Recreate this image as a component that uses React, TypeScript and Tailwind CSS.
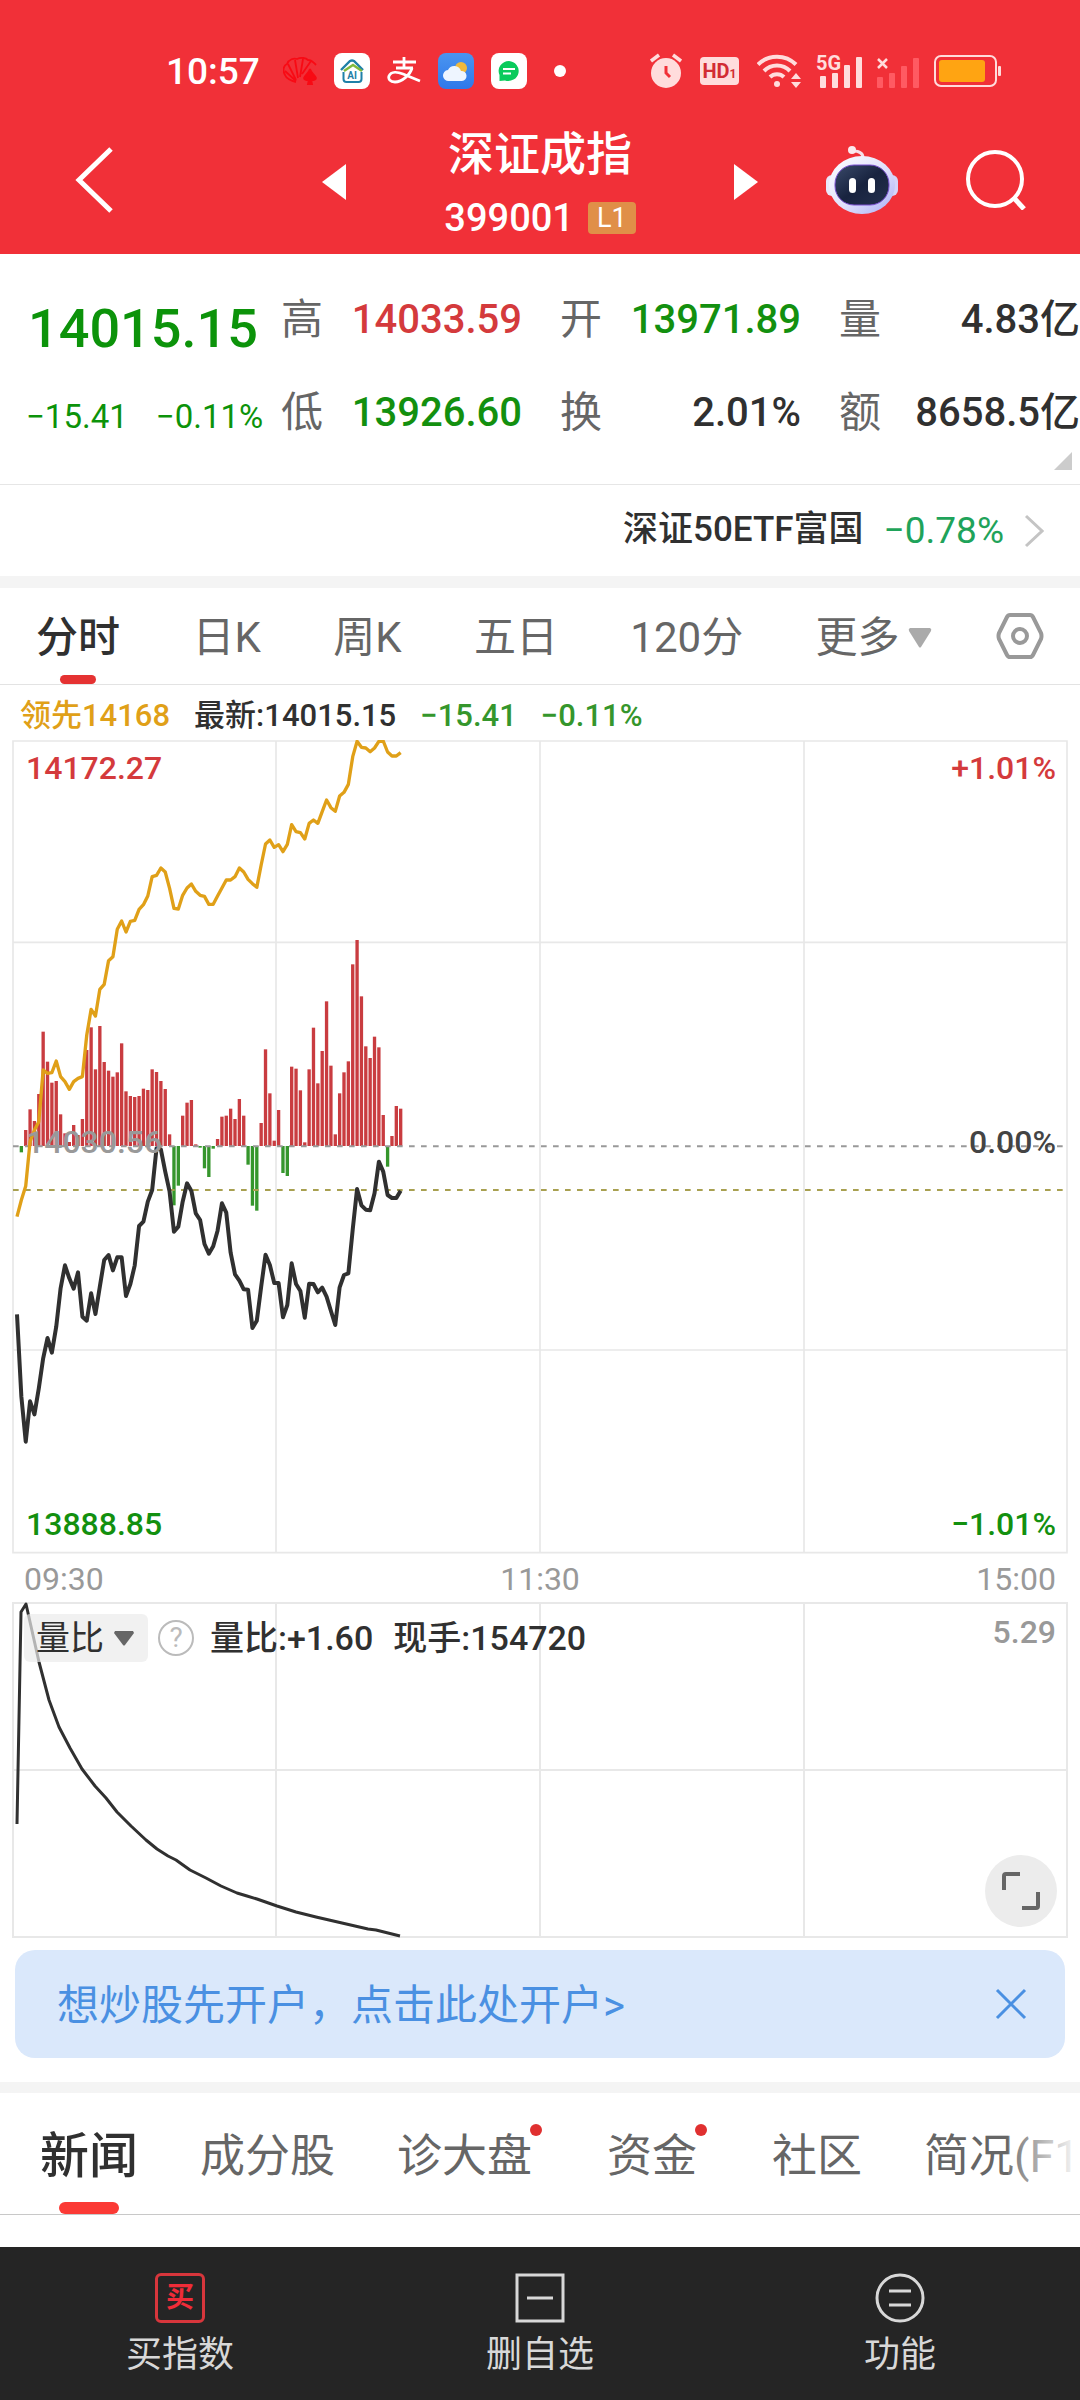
import { useState } from "react";
import type { ReactNode } from "react";

// one value per minute since 09:30, in chart units
const PRICE = [
  1723, 1970, 2105, 1984, 2023, 1945, 1855, 1794, 1838, 1760, 1645, 1576, 1615, 1646, 1597, 1730, 1742, 1660, 1722, 1640,
  1560, 1545, 1591, 1552, 1552, 1668, 1632, 1576, 1458, 1445, 1385, 1350, 1225, 1228, 1295, 1355, 1475, 1460, 1385, 1330,
  1353, 1420, 1440, 1512, 1541, 1519, 1472, 1390, 1418, 1538, 1603, 1622, 1648, 1649, 1764, 1742, 1640, 1544, 1575, 1629,
  1629, 1732, 1695, 1570, 1632, 1653, 1733, 1631, 1632, 1657, 1643, 1670, 1713, 1755, 1642, 1605, 1600, 1468, 1347, 1396,
  1409, 1411, 1360, 1265, 1295, 1365, 1374, 1374, 1352,
];

const LEADING = [
  1430, 1380, 1338, 1205, 1170, 1145, 990, 1000, 998, 963, 1010, 1025, 1048, 1025, 1015, 1010, 885, 808, 828, 748,
  733, 662, 650, 568, 543, 576, 544, 541, 508, 494, 468, 410, 406, 384, 396, 445, 505, 507, 466, 444,
  432, 454, 466, 469, 493, 493, 468, 444, 420, 420, 410, 384, 396, 418, 431, 442, 375, 312, 300, 322,
  314, 335, 313, 254, 275, 278, 297, 250, 240, 250, 215, 180, 203, 214, 168, 157, 133, 50, 4, 22,
  24, 35, 24, 4, 3, 36, 48, 48, 38,
];

const BARS = [
  0, -19, 48, 110, 75, 156, 343, 253, 190, 195, 95, 38, 12, 63, 33, 81, 288, 356, 230, 360,
  252, 226, 208, 221, 308, 164, 150, 147, 150, 172, 168, 230, 222, 195, 171, 35, -178, -119, 91, 130,
  138, 5, -5, -67, -93, -8, 21, 88, 91, 112, 81, 141, 91, -56, -179, -194, 69, 290, 158, 16,
  108, -81, -90, 238, 232, 167, 11, 230, 355, 188, 285, 434, 241, 35, 158, 221, 254, 545, 618, 449,
  299, 264, 328, 296, 93, -62, 30, 120, 112,
];

const RATIO =
  "5,222 9,10 14,2 27,60 37,98 47,125 58,146 70,167 83,184 94,196 105,210 119,224 134,238 145,247 156,254 164,258 178,268 194,276 209,284 225,291 235,294 245,297 265,304 284,310 304,315 330,321 356,327 364,328 388,334";

const BASE = 1218;
const minuteX = (i: number) => 15 + i * 13.08;
const toPoints = (ys: number[]) => ys.map((y, i) => `${minuteX(i).toFixed(1)},${y}`).join(" ");

const STATS = [
  [
    { label: "高", value: "14033.59", color: "text-[#d43a3c]" },
    { label: "低", value: "13926.60", color: "text-[#13900f]" },
  ],
  [
    { label: "开", value: "13971.89", color: "text-[#13900f]" },
    { label: "换", value: "2.01%", color: "text-[#303030]" },
  ],
  [
    { label: "量", value: "4.83亿", color: "text-[#303030]" },
    { label: "额", value: "8658.5亿", color: "text-[#303030]" },
  ],
];

const PERIODS = ["分时", "日K", "周K", "五日", "120分"];

const NEWS_TABS = [
  { name: "新闻", dot: false, size: "" },
  { name: "成分股", dot: false, size: "" },
  { name: "诊大盘", dot: true, size: "" },
  { name: "资金", dot: true, size: "px-[13px]" },
  { name: "社区", dot: false, size: "" },
  { name: "简况(F10)", dot: false, size: "" },
];

function StatusBar() {
  return (
    <div className="flex h-[110px] items-center justify-between pt-8 pr-[79px] pl-[166px]">
      <div className="flex items-center gap-[17px]">
        <span className="mr-1.5 text-[37px] leading-none font-medium">10:57</span>
        <svg width="34" height="28" viewBox="0 0 34 28" fill="none" stroke="#f80a14" strokeWidth="1.800">
          <path d="M13 25C8 24 3 21 2 18-1 13 1 8 4 7c2-5 7-6 10-5 4-2 9-1 11 1 4 0 6 3 8 5" />
          <path d="M13 24 2 14M13 23 5 7M15 21 12 3M17 20 20 2M19 17 28 4" />
          <path d="M27 12c1 4 5 6 6 9 0 2-3 3-5 1l1 5h-4l1-5c-2 2-5 1-5-1 1-3 5-5 6-9z" fill="#f80a14" />
        </svg>
        <svg width="36" height="36" viewBox="0 0 36 36" fill="none">
          <rect width="36" height="36" rx="8" fill="#fff" />
          <path d="M7 17 16 8q2-1 4 0l9 9" stroke="#1f80a8" strokeWidth="2.400" />
          <path d="M10 18l9-6 9 6" stroke="#7fb93d" strokeWidth="2.400" />
          <path d="M9.500 19v7q0 3 3 3h12q3 0 3-3v-7" stroke="#1f80a8" strokeWidth="2" />
          <text x="18" y="26" fontSize="10" fontWeight="700" textAnchor="middle" fill="#1f80a8">AI</text>
        </svg>
        <svg width="34" height="28" viewBox="0 0 34 28" fill="none" stroke="#fff" strokeWidth="2.800">
          <path d="M6 5h23M9 11h17M17 0v11" />
          <path d="M25 11C23 18 15 25 8 25 3 25 1 22 2 19c2-5 9-4 14-2l17 7" />
        </svg>
        <svg width="36" height="36" viewBox="0 0 36 36">
          <defs>
            <linearGradient id="sky" x1="0" y1="0" x2="0" y2="1">
              <stop offset="0" stopColor="#4a95f0" />
              <stop offset="1" stopColor="#2f78ea" />
            </linearGradient>
          </defs>
          <rect width="36" height="36" rx="8" fill="url(#sky)" />
          <circle cx="23" cy="15" r="6" fill="#f0b93c" />
          <path d="M11 28a5.500 5.500 0 0 1-1-11 7 7 0 0 1 13 1 5 5 0 0 1 1 10z" fill="#eef5ff" />
        </svg>
        <svg width="36" height="36" viewBox="0 0 36 36">
          <rect width="36" height="36" rx="8" fill="#fff" />
          <path d="M18 8a10.500 10 0 1 1-4 19.500L8.500 28v-6A10.500 10 0 0 1 18 8z" fill="#0acb5c" />
          <path d="M12 16h12M12 20.500h8" stroke="#fff" strokeWidth="1.800" />
        </svg>
        <span className="ml-2.5 size-3 rounded-full bg-white" />
      </div>

      <div className="flex items-center gap-3.5 text-[#ffdcdc]">
        <svg width="32" height="36" viewBox="0 0 32 36" fill="currentColor">
          <circle cx="16" cy="20" r="15" />
          <path d="M1 8 9 2M31 8l-8-6" stroke="currentColor" strokeWidth="3.500" />
          <path d="M16 13v7l4 4" fill="none" stroke="#f13038" strokeWidth="3" />
        </svg>
        <span className="ml-1 flex h-7 w-[39px] items-baseline justify-center rounded bg-[#ffdcdc] leading-7 text-[#d22c33]">
          <b className="text-[20px]">HD</b>
          <b className="text-[12px]">1</b>
        </span>
        <svg className="ml-1" width="45" height="36" viewBox="0 0 45 36" fill="none" stroke="currentColor" strokeWidth="4">
          <path d="M1 11.500a27 27 0 0 1 38 0M7 18a18 18 0 0 1 26 0M13 24a10 10 0 0 1 14 0" />
          <circle cx="20" cy="31" r="3" fill="currentColor" stroke="none" />
          <path d="M34 26l5-6 5 6zM34 29l5 6 5-6z" fill="currentColor" stroke="none" />
        </svg>
        <div className="relative">
          <svg width="47" height="34" viewBox="0 0 47 34" fill="currentColor">
            <rect x="4" y="22" width="6" height="12" rx="1" />
            <rect x="16" y="19" width="6" height="15" rx="1" />
            <rect x="28" y="11" width="6" height="23" rx="1" />
            <rect x="40" y="3" width="6" height="31" rx="1" />
          </svg>
          <b className="absolute top-0 left-0 text-[20px] leading-[18px]">5G</b>
        </div>
        <svg width="43" height="34" viewBox="0 0 43 34">
          <g fill="#ff5a62">
            <rect y="23" width="6" height="11" rx="1" />
            <rect x="12" y="19" width="6" height="15" rx="1" />
            <rect x="24" y="12" width="6" height="22" rx="1" />
            <rect x="36" y="4" width="6" height="30" rx="1" />
          </g>
          <path d="M1 5l9 9M10 5l-9 9" stroke="currentColor" strokeWidth="2.500" />
        </svg>
        <svg width="67" height="32" viewBox="0 0 67 32" fill="none">
          <rect x="1" y="1" width="61" height="30" rx="6" stroke="currentColor" strokeWidth="2" />
          <rect x="5" y="5" width="46" height="22" rx="3" fill="#ffa412" />
          <rect x="64" y="11" width="3" height="10" rx="1" fill="currentColor" />
        </svg>
      </div>
    </div>
  );
}

function Robot() {
  return (
    <svg width="72" height="68" viewBox="0 0 72 68">
      <defs>
        <linearGradient id="shell" x1="0" y1="0" x2="1" y2="1">
          <stop offset="0" stopColor="#ffffff" />
          <stop offset="0.550" stopColor="#dfe0fb" />
          <stop offset="1" stopColor="#a9aef5" />
        </linearGradient>
        <linearGradient id="visor" x1="0" y1="0" x2="1" y2="1">
          <stop offset="0" stopColor="#3a4a6a" />
          <stop offset="0.500" stopColor="#18233f" />
          <stop offset="1" stopColor="#24304d" />
        </linearGradient>
      </defs>
      <path d="M37 12c0-5-4-7-10-7" fill="none" stroke="#f6dfe8" strokeWidth="3" />
      <circle cx="26" cy="4" r="4" fill="#fbe9ee" />
      <rect x="0" y="29" width="12" height="21" rx="6" fill="#e9e8fb" />
      <rect x="60" y="29" width="12" height="21" rx="6" fill="#d5d4f8" />
      <ellipse cx="36" cy="39" rx="33" ry="29" fill="url(#shell)" />
      <rect x="9" y="19" width="54" height="40" rx="19" fill="url(#visor)" stroke="#7a4fd0" strokeWidth="1" />
      <rect x="23" y="32" width="7" height="15" rx="3.500" fill="#fff" />
      <rect x="42" y="32" width="7" height="15" rx="3.500" fill="#fff" />
    </svg>
  );
}

function TitleBar() {
  return (
    <div className="grid h-36 grid-cols-[1fr_auto_1fr] items-center">
      <div className="pb-1 pl-[75px]">
        <button aria-label="返回" className="block">
          <svg width="38" height="66" viewBox="0 0 38 66" fill="none" stroke="#fff" strokeWidth="5">
            <path d="M36 2 4 33l32 31" />
          </svg>
        </button>
      </div>
      <div className="flex items-center gap-[98px]">
        <button aria-label="上一个">
          <svg width="24" height="36" viewBox="0 0 24 36" fill="#fff">
            <path d="M24 0v36L0 18z" />
          </svg>
        </button>
        <div className="pt-2 text-center">
          <h1 className="text-[46px] leading-16 font-medium">深证成指</h1>
          <div className="flex items-center justify-center gap-3.5 leading-16">
            <span className="text-[38px] font-medium">399001</span>
            <span className="rounded bg-[#e08f48] px-[9px] text-[27px] leading-8">L1</span>
          </div>
        </div>
        <button aria-label="下一个">
          <svg width="24" height="36" viewBox="0 0 24 36" fill="#fff">
            <path d="M0 0v36l24-18z" />
          </svg>
        </button>
      </div>
      <div className="flex items-center justify-end gap-[68px] pr-[54px] pb-1">
        <button aria-label="助手">
          <Robot />
        </button>
        <button aria-label="搜索">
          <svg width="60" height="60" viewBox="0 0 60 60" fill="none" stroke="#fff" strokeWidth="4">
            <circle cx="29" cy="29" r="27" />
            <path d="M48 48l10 11" strokeWidth="5" />
          </svg>
        </button>
      </div>
    </div>
  );
}

function Quote() {
  return (
    <section className="relative flex border-b border-[#e6e6e6] pb-[25px]">
      <div className="w-[281px] shrink-0 pt-7 text-[#0c930a]">
        <div className="pl-7 text-[54px] leading-[93px] font-medium">14015.15</div>
        <div className="flex gap-7 pl-[26px] text-[33px] leading-[84px]">
          <span>−15.41</span>
          <span>−0.11%</span>
        </div>
      </div>
      <div className="grid flex-1 grid-cols-3 gap-[38px] pt-[19px]">
        {STATS.map((col) => (
          <dl key={col[0].label}>
            {col.map((s) => (
              <div key={s.label} className="flex h-[93px] items-center justify-between whitespace-nowrap">
                <dt className="text-[42px] leading-none text-[#666]">{s.label}</dt>
                <dd className={`text-[40px] leading-none font-medium ${s.color}`}>{s.value}</dd>
              </div>
            ))}
          </dl>
        ))}
      </div>
      <svg className="absolute right-2 bottom-3.5" width="18" height="18" viewBox="0 0 18 18" fill="#ccc">
        <path d="M18 0v18H0z" />
      </svg>
    </section>
  );
}

function PeriodTabs() {
  const [period, setPeriod] = useState("分时");

  return (
    <nav className="flex h-[97px] items-center justify-between border-b border-[#e3e3e3] px-9 text-[42px] leading-none text-[#666]">
      {PERIODS.map((p) => (
        <button
          key={p}
          onClick={() => setPeriod(p)}
          className={p === period ? "relative h-full pt-1 font-medium text-[#303030]" : "h-full pt-1"}
        >
          {p}
          {p === period && (
            <span className="absolute bottom-0 left-1/2 h-[9px] w-9 -translate-x-1/2 rounded-full bg-[#e53232]" />
          )}
        </button>
      ))}
      <button className="-mr-2 flex h-full items-center gap-2 pt-1">
        更多
        <svg width="24" height="20" viewBox="0 0 24 20" fill="#aaa">
          <path d="M2 0h20q2 1 1 3L13 19q-1 1-2 0L1 3Q0 1 2 0z" />
        </svg>
      </button>
      <button aria-label="设置">
        <svg width="48" height="46" viewBox="0 0 48 46" fill="none" stroke="#999" strokeWidth="4">
          <path d="M14 2h20q2 0 3 2l8 16q1 3 0 6l-8 16q-1 2-3 2H14q-2 0-3-2L3 26q-1-3 0-6l8-16q1-2 3-2z" />
          <circle cx="24" cy="23" r="7" />
        </svg>
      </button>
    </nav>
  );
}

function PriceChart() {
  return (
    <div className="relative text-[32px] leading-9 font-medium">
      <svg className="block w-full" viewBox="0 0 3168 2442" fill="none">
        <g stroke="#e8e8e8" strokeWidth="5">
          <path d="M3 3h3162v2435H3zM3 607h3162M3 1830h3162" />
          <path d="M792 3v2435M1584 3v2435M2376 3v2435" />
        </g>
        {BARS.map((h, i) => (
          <rect
            key={i}
            x={minuteX(i) - 5}
            y={h > 0 ? BASE - h : BASE}
            width="10"
            height={Math.abs(h)}
            fill={h > 0 ? "#c93c40" : "#35962c"}
          />
        ))}
        <path d={`M3 ${BASE + 1}H3165`} stroke="#999" strokeWidth="6" strokeDasharray="17 19" />
        <path d="M3 1350H3165" stroke="#a8a050" strokeWidth="6" strokeDasharray="17 19" />
        <polyline points={toPoints(LEADING)} stroke="#e0a018" strokeWidth="10" strokeLinejoin="round" />
        <polyline points={toPoints(PRICE)} stroke="#303030" strokeWidth="12" strokeLinejoin="round" />
      </svg>
      <span className="absolute top-2.5 left-3.5 text-[#d43a3c]">14172.27</span>
      <span className="absolute top-2.5 right-3 text-[#d43a3c]">+1.01%</span>
      <span className="absolute top-1/2 left-3.5 -translate-y-[23px] text-[#999]">14030.56</span>
      <span className="absolute top-1/2 right-3 -translate-y-[23px] text-[#444]">0.00%</span>
      <span className="absolute bottom-3 left-3.5 text-[#13900f]">13888.85</span>
      <span className="absolute right-3 bottom-3 text-[#13900f]">−1.01%</span>
    </div>
  );
}

function RatioChart() {
  return (
    <div className="relative">
      <svg className="block w-full" viewBox="0 0 1056 336" fill="none">
        <path
          d="M1 1h1054v334H1zM1 168h1054M264 1v334M528 1v334M792 1v334"
          stroke="#e8e8e8"
          strokeWidth="2"
        />
        <polyline points={RATIO} stroke="#303030" strokeWidth="3" strokeLinejoin="round" />
      </svg>
      <div className="absolute top-3 left-3 flex items-center text-[34px] leading-[48px] text-[#303030]">
        <button className="flex items-center gap-2.5 rounded-md bg-[#ebebeb]/70 pr-3.5 pl-3">
          量比
          <svg width="20" height="15" viewBox="0 0 20 15" fill="#666">
            <path d="M1 0h18l1 2-9 12q-1 1-2 0L0 2z" />
          </svg>
        </button>
        <button
          aria-label="说明"
          className="ml-2.5 flex size-9 items-center justify-center rounded-full border-2 border-[#bbb] text-[28px] leading-none text-[#bbb]"
        >
          ?
        </button>
        <span className="ml-4 font-medium">量比:+1.60</span>
        <span className="ml-5 font-medium">现手:154720</span>
      </div>
      <span className="absolute top-3 right-3 text-[32px] leading-9 font-medium text-[#999]">5.29</span>
      <button
        aria-label="全屏"
        className="absolute right-[11px] bottom-[11px] flex size-[72px] items-center justify-center rounded-full bg-[#ececec]"
      >
        <svg width="38" height="38" viewBox="0 0 38 38" fill="none" stroke="#666" strokeWidth="4">
          <path d="M2 18V4q0-2 2-2h14M36 20v14q0 2-2 2H20" />
        </svg>
      </button>
    </div>
  );
}

function NewsTabs() {
  const [tab, setTab] = useState("新闻");

  return (
    <nav className="relative overflow-hidden border-b border-[#c8c8c8]">
      <div className="flex h-[121px] gap-[62px] pl-10 text-[45px] leading-none whitespace-nowrap text-[#666]">
        {NEWS_TABS.map((t) => (
          <button
            key={t.name}
            onClick={() => setTab(t.name)}
            className={`relative shrink-0 pt-1.5 ${t.size} ${t.name === tab ? "text-[49px] font-medium text-[#303030]" : ""}`}
          >
            <span className="relative">
              {t.name}
              {t.dot && <span className="absolute -top-1.5 -right-2.5 size-3 rounded-full bg-[#e03030]" />}
            </span>
            {t.name === tab && (
              <span className="absolute bottom-0 left-1/2 h-3 w-15 -translate-x-1/2 rounded-full bg-[#fb3a35]" />
            )}
          </button>
        ))}
      </div>
      <div className="pointer-events-none absolute inset-y-0 right-0 w-[72px] bg-linear-to-r from-white/10 to-white" />
    </nav>
  );
}

function BarButton({ label, children }: { label: string; children: ReactNode }) {
  return (
    <button className="flex flex-col items-center gap-2.5 pt-[26px] text-[36px] leading-[44px] text-[#d8d8d8]">
      {children}
      {label}
    </button>
  );
}

export default function App() {
  const [showBanner, setShowBanner] = useState(true);

  return (
    <div className="flex min-h-screen flex-col overflow-hidden bg-white font-['Roboto','Noto_Sans_CJK_SC',sans-serif] text-[#303030]">
      <header className="bg-[#f13038] text-white">
        <StatusBar />
        <TitleBar />
      </header>

      <Quote />

      <a href="#etf" className="flex h-[91px] items-center justify-end pr-9">
        <span className="text-[35px] font-medium">深证50ETF富国</span>
        <span className="ml-5 text-[37px] text-[#1fa35a]">−0.78%</span>
        <svg className="ml-5" width="20" height="34" viewBox="0 0 20 34" fill="none" stroke="#c4c4c4" strokeWidth="3">
          <path d="M2 2l16 15L2 32" />
        </svg>
      </a>
      <div className="h-3 bg-[#f4f4f4]" />

      <PeriodTabs />

      <main className="px-3">
        <div className="flex h-[55px] items-center pt-1.5 pl-2 text-[31px] leading-none font-medium whitespace-nowrap">
          <span className="text-[#e0a018]">领先14168</span>
          <span className="ml-6">最新:14015.15</span>
          <span className="ml-6 text-[#35962c]">−15.41</span>
          <span className="ml-6 text-[#35962c]">−0.11%</span>
        </div>
        <PriceChart />
        <div className="grid h-12 grid-cols-3 items-center px-3 pt-0.5 text-[32px] leading-none text-[#999]">
          <span>09:30</span>
          <span className="text-center">11:30</span>
          <span className="text-right">15:00</span>
        </div>
        <RatioChart />
      </main>

      {showBanner && (
        <div className="mx-[15px] mt-3 flex h-[108px] items-center justify-between rounded-[20px] bg-[#dae8fb] pr-[38px] pl-[42px] text-[#4a90e2]">
          <a href="#open" className="pt-0.5 text-[42px]">
            想炒股先开户，点击此处开户&gt;
          </a>
          <button aria-label="关闭" onClick={() => setShowBanner(false)}>
            <svg width="32" height="32" viewBox="0 0 32 32" fill="none" stroke="currentColor" strokeWidth="3">
              <path d="M2 2l28 28M30 2 2 30" />
            </svg>
          </button>
        </div>
      )}
      <div className="mt-6 h-[11px] bg-[#f4f4f4]" />

      <NewsTabs />

      <footer className="mt-8 grid flex-1 grid-cols-3 items-start bg-[#252525] pb-4">
        <BarButton label="买指数">
          <span className="flex size-[50px] items-center justify-center rounded-md border-3 border-[#d8363c] text-[28px] leading-none font-bold text-[#f02c38]">
            买
          </span>
        </BarButton>
        <BarButton label="删自选">
          <svg width="50" height="50" viewBox="0 0 50 50" fill="none" stroke="currentColor" strokeWidth="3">
            <path d="M2 2h46v46H2zM12 25h26" />
          </svg>
        </BarButton>
        <BarButton label="功能">
          <svg width="52" height="50" viewBox="0 0 52 50" fill="none" stroke="currentColor" strokeWidth="3">
            <circle cx="26" cy="25" r="23" />
            <path d="M15 18h22M15 32h22" />
          </svg>
        </BarButton>
      </footer>
    </div>
  );
}
